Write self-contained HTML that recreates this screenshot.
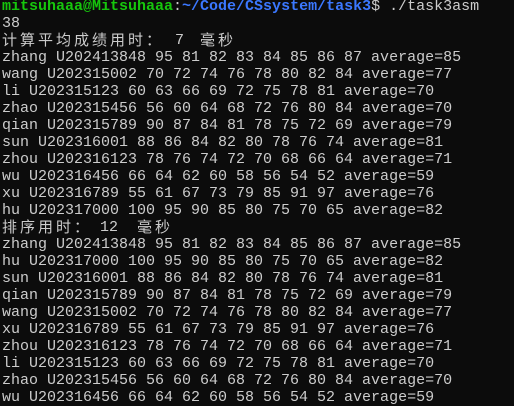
<!DOCTYPE html>
<html><head><meta charset="utf-8"><style>
html,body{margin:0;padding:0;background:#0c0c0c;width:514px;height:404px;overflow:hidden}
.t{position:absolute;left:2px;top:-2px;font-family:"Liberation Mono","Noto Sans CJK SC",monospace;font-size:15px;line-height:17px;color:#cccccc}
.l{height:17px;position:relative;white-space:pre;overflow:hidden}
.g{color:#16c60c;font-weight:bold}
.b{color:#3b78ff;font-weight:bold}
.c{font-family:"Noto Sans CJK SC",sans-serif;letter-spacing:3px;position:absolute;top:-1px;line-height:17px}
.a{position:absolute;top:0}
</style></head><body><div class="t"><div class="l"><span class="g">mitsuhaaa@Mitsuhaaa</span>:<span class="b">~/Code/CSsystem/task3</span>$ ./task3asm</div><div class="l">38</div><div class="l"><span class="c" style="left:0">计算平均成绩用时：</span><span class="a" style="left:173px">7</span><span class="c" style="left:198px">毫秒</span></div><div class="l">zhang U202413848 95 81 82 83 84 85 86 87 average=85</div><div class="l">wang U202315002 70 72 74 76 78 80 82 84 average=77</div><div class="l">li U202315123 60 63 66 69 72 75 78 81 average=70</div><div class="l">zhao U202315456 56 60 64 68 72 76 80 84 average=70</div><div class="l">qian U202315789 90 87 84 81 78 75 72 69 average=79</div><div class="l">sun U202316001 88 86 84 82 80 78 76 74 average=81</div><div class="l">zhou U202316123 78 76 74 72 70 68 66 64 average=71</div><div class="l">wu U202316456 66 64 62 60 58 56 54 52 average=59</div><div class="l">xu U202316789 55 61 67 73 79 85 91 97 average=76</div><div class="l">hu U202317000 100 95 90 85 80 75 70 65 average=82</div><div class="l"><span class="c" style="left:0">排序用时：</span><span class="a" style="left:98px">12</span><span class="c" style="left:135px">毫秒</span></div><div class="l">zhang U202413848 95 81 82 83 84 85 86 87 average=85</div><div class="l">hu U202317000 100 95 90 85 80 75 70 65 average=82</div><div class="l">sun U202316001 88 86 84 82 80 78 76 74 average=81</div><div class="l">qian U202315789 90 87 84 81 78 75 72 69 average=79</div><div class="l">wang U202315002 70 72 74 76 78 80 82 84 average=77</div><div class="l">xu U202316789 55 61 67 73 79 85 91 97 average=76</div><div class="l">zhou U202316123 78 76 74 72 70 68 66 64 average=71</div><div class="l">li U202315123 60 63 66 69 72 75 78 81 average=70</div><div class="l">zhao U202315456 56 60 64 68 72 76 80 84 average=70</div><div class="l">wu U202316456 66 64 62 60 58 56 54 52 average=59</div></div></body></html>
